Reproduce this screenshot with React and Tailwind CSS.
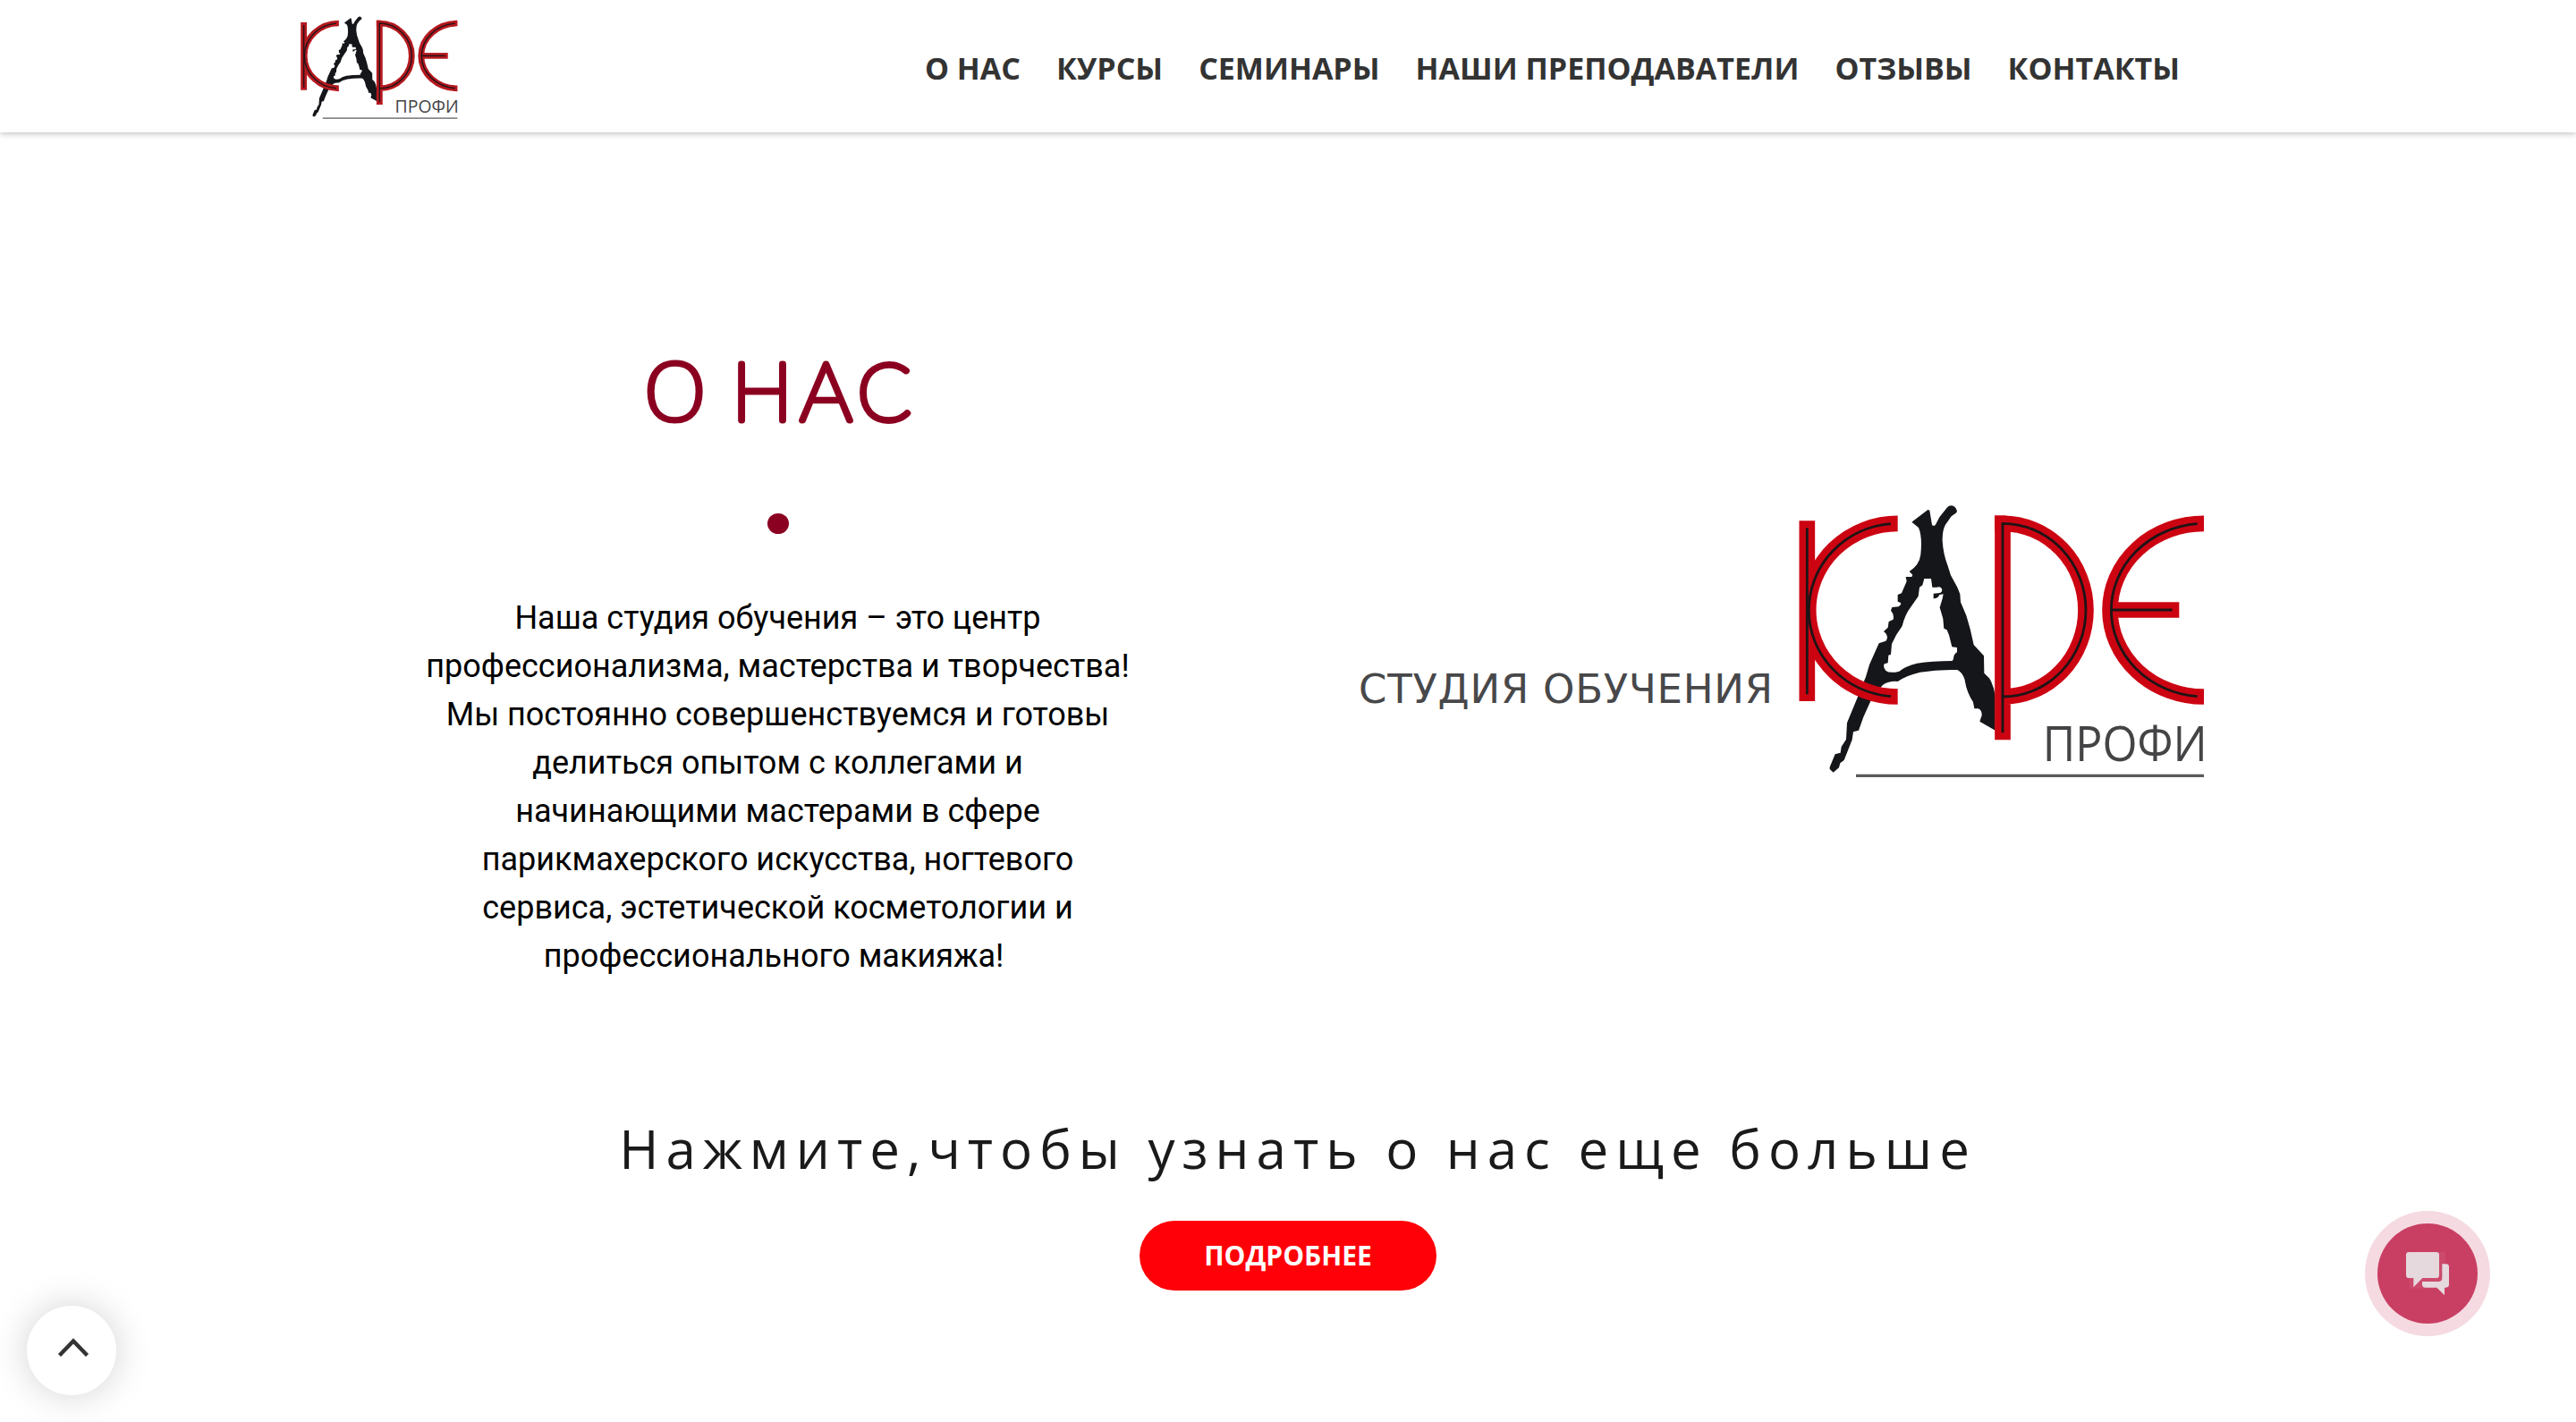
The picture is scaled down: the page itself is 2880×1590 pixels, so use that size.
import React from "react";

const NAV = ["О НАС", "КУРСЫ", "СЕМИНАРЫ", "НАШИ ПРЕПОДАВАТЕЛИ", "ОТЗЫВЫ", "КОНТАКТЫ"];

const ABOUT = [
  "Наша студия обучения – это центр",
  "профессионализма, мастерства и творчества!",
  "Мы постоянно совершенствуемся и готовы",
  "делиться опытом с коллегами и",
  "начинающими мастерами в сфере",
  "парикмахерского искусства, ногтевого",
  "сервиса, эстетической косметологии и",
  "профессионального макияжа!\u00a0",
];

const LETTER_A =
  "M472 131L526 90L532 92L540 140Q545 147 552 140L565 115L590 83Q600 72 613 78Q628 88 622 100L605 112L585 140Q574 160 575 195Q578 240 592 275L603 310L625 350L634 373L636 400L655 445L668 490L680 543L714 580L715 638L732 655Q748 680 752 715V830L700 800L707 780Q708 762 695 757L682 757L678 735Q655 700 650 660Q642 635 625 627Q560 625 500 635Q455 645 425 666Q410 664 395 668Q375 672 365 690L335 730L310 785L294 830L276 835L272 862L245 930L232 940L228 955L209 971L197 960V953L215 910L233 905L236 885L252 860L255 805L290 720L318 650L330 610L362 538L385 530Q395 518 385 505L378 498L392 485L395 465L410 458Q414 440 402 428L406 417L428 415Q445 402 425 398V375L438 370L455 330L452 315L472 315L475 308L464 297Q498 275 502 240Q508 180 495 150Z" +
  "M514 321L537 321L541 350L555 350Q572 345 574 360Q572 370 560 370L545 371V388Q560 388 565 375L578 373L575 388L566 418L577 455L580 488L590 493L597 510L607 550L624 552V568Q612 575 612 590L608 597Q540 598 490 605Q450 615 430 632Q400 640 385 630Q375 618 380 607L392 604L394 578L402 575L405 540L420 510L440 480Q450 440 470 415L494 380L498 350L508 343Z";

function Logo({ className, red, inline }) {
  return (
    <svg viewBox="0 0 1560 1050" preserveAspectRatio="none" className={className}>
      <path d={LETTER_A} fill="#15161a" fillRule="evenodd" />
      <g fill="none" stroke={red} strokeWidth="53">
        <path d="M121 127V732" />
        <path d="M425 136A300 290.5 0 0 0 425 717" />
        <path d="M777 862V136A279 290.5 0 0 1 777 717" />
        <path d="M750 136H790" />
        <path d="M1452 136A315 290.5 0 0 0 1452 717" />
        <path d="M1137 426H1369" />
      </g>
      <g fill="none" stroke="#1d1416" strokeWidth={inline}>
        <path d="M121 151V709" />
        <path d="M402 137A300 290.5 0 0 0 402 716" />
        <path d="M777 838V136A279 290.5 0 0 1 777 717" />
        <path d="M1430 137A315 290.5 0 0 0 1430 716" />
        <path d="M1137 426H1346" />
      </g>
      <text
        x="911"
        y="933"
        fontSize="165"
        textLength="552"
        lengthAdjust="spacingAndGlyphs"
        fill="#444446"
        className="font-['Open_Sans',sans-serif]"
      >
        ПРОФИ
      </text>
      <path d="M285 982H1452" stroke="#5a5a5c" strokeWidth="10" />
    </svg>
  );
}

function Header() {
  return (
    <header className="flex h-[148px] justify-between bg-white pl-[324px] pr-[443px] shadow-[0_0_8px_rgba(0,0,0,0.36)]">
      <Logo className="mt-[8.5px] h-[131.6px] w-[201.4px]" red="#b5181f" inline="11" />
      <nav className="flex items-center gap-10 pt-1 text-[34px] font-bold text-[#333333]">
        {NAV.map((label) => (
          <a key={label} className="whitespace-nowrap">
            {label}
          </a>
        ))}
      </nav>
    </header>
  );
}

function Heading() {
  return (
    <h2>
      <svg
        viewBox="0 0 320 132"
        className="h-[132px] w-[320px] overflow-visible"
        fill="#8b0020"
        stroke="#8b0020"
        strokeWidth="6.8"
        strokeLinejoin="round"
      >
        <text y="98" fontSize="90" className="font-['Lato',sans-serif] font-thin">
          <tspan x="9.5" y="99" fontSize="92" strokeWidth="3.2" className="font-['Open_Sans',sans-serif] font-light">О</tspan>
          <tspan x="108" y="98" fontSize="91">Н</tspan>
          <tspan x="184.5" fontSize="91">А</tspan>
          <tspan x="248.5" fontSize="88">С</tspan>
        </text>
      </svg>
    </h2>
  );
}

function ChatButton() {
  return (
    <button className="absolute left-[2644px] top-[1354px] flex size-[140px] items-center justify-center rounded-full bg-[#f5dae1]">
      <span className="flex size-[112px] items-center justify-center rounded-full bg-[#c93f63]">
        <svg viewBox="114 114 336 336" className="size-[112px]" fill="#e5d9dd">
          <rect x="221" y="210" width="121" height="122" fill="#fff" opacity="0.06" />
          <path d="M220 210h91q10 0 10 10v67q0 10-10 10h-46l-30 31v-31h-15q-10 0-10-10v-67q0-10 10-10z" />
          <path d="M331 250h13q10 0 10 10v59q0 10-10 10h-5v26l-26-26h-38q-11 0-11-11v-9h55q12 0 12-12z" />
        </svg>
      </span>
    </button>
  );
}

function UpButton() {
  return (
    <button className="absolute left-[30px] top-[1460px] size-[100px] rounded-full bg-white shadow-[0_0_40px_rgba(0,0,0,0.18)]">
      <svg viewBox="0 0 100 100" className="size-[100px]" fill="none" stroke="#333" strokeWidth="4.4">
        <path d="M36.5 55.5L52 39.5L67.5 55.5" />
      </svg>
    </button>
  );
}

export default function App() {
  return (
    <div className="relative h-[1590px] w-[2880px] overflow-hidden bg-white font-['Open_Sans',sans-serif]">
      <Header />
      <main>
        <section className="flex pl-[469px] pt-[224px]">
          <div className="flex w-[801px] flex-col items-center">
            <Heading />
            <div className="mt-[70px] h-[23px] w-6 rounded-[50%] bg-[#8b0020]" />
            <p className="mt-[67px] text-center font-['Roboto',sans-serif] text-[36px] leading-[54px] text-black">
              {ABOUT.map((line) => (
                <span key={line} className="block whitespace-nowrap">
                  {line}
                </span>
              ))}
            </p>
          </div>
          <div className="ml-[249px] mt-[168px] flex items-start">
            <span className="mt-[205px] w-[461px] whitespace-nowrap font-['DejaVu_Sans',sans-serif] text-[45px] leading-[52px] tracking-[0.75px] text-[#48484a]">
              СТУДИЯ ОБУЧЕНИЯ
            </span>
            <Logo className="h-[350px] w-[520px]" red="#cc0412" inline="8.5" />
          </div>
        </section>
        <section className="mt-[147px] flex flex-col items-center">
          <h3 className="whitespace-nowrap pl-[22px] text-[60px] leading-[82px] tracking-[8px] text-[#1a1a1a]">
            Нажмите,чтобы узнать о нас еще больше
          </h3>
          <button className="mt-10 h-[78px] w-[332px] rounded-full bg-[#ff0008] text-[30px] font-bold leading-[78px] text-white">
            ПОДРОБНЕЕ
          </button>
        </section>
      </main>
      <UpButton />
      <ChatButton />
    </div>
  );
}
